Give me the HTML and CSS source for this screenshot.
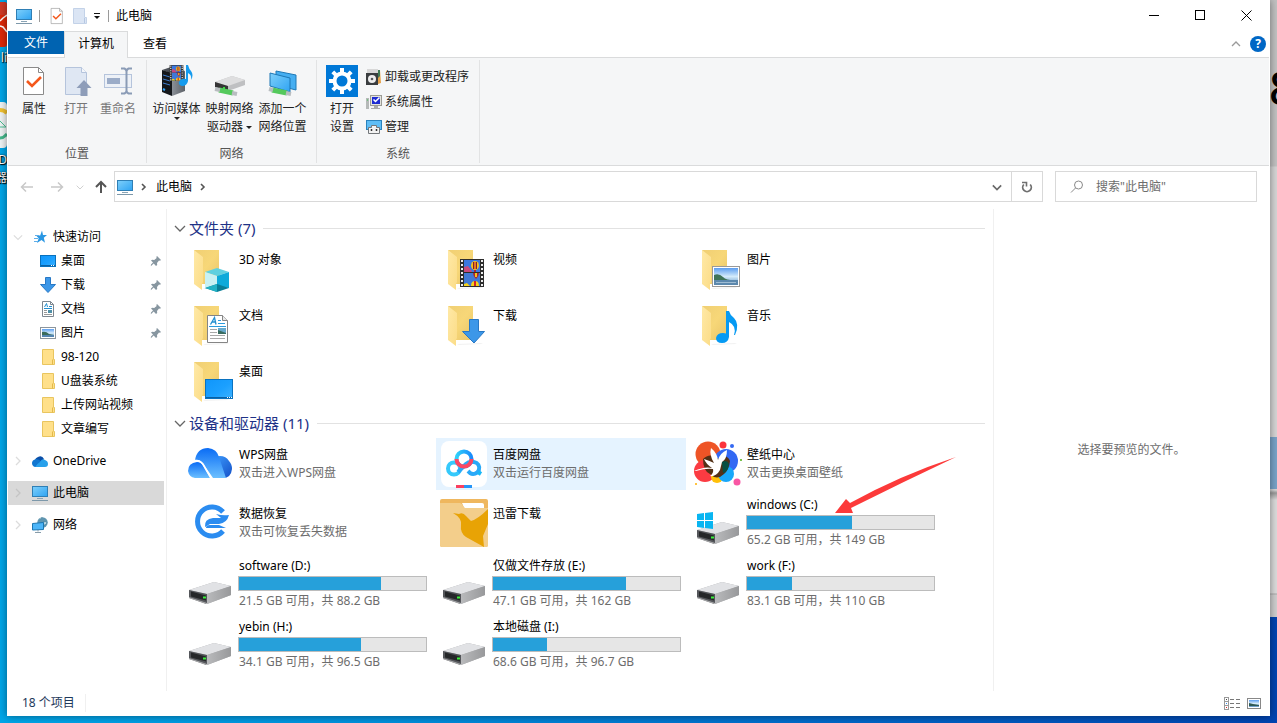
FILE: index.html
```html
<!DOCTYPE html>
<html lang="zh-CN">
<head>
  <meta charset="UTF-8" />
  <meta name="viewport" content="width=device-width, initial-scale=1.0"/>
  <title>此电脑</title>
  <link rel="stylesheet" href="styles.css">
</head>
<body>
  <!-- Icon definitions -->
  <svg class="defs" width="0" height="0" aria-hidden="true">
    <defs>
      <linearGradient id="g-screen" x1="0" y1="0" x2="1" y2="1"><stop offset="0" stop-color="#7fd0fb"/><stop offset="1" stop-color="#2ea3f2"/></linearGradient>
      <linearGradient id="g-desk" x1="0" y1="0" x2="1" y2="1"><stop offset="0" stop-color="#0f96fb"/><stop offset=".55" stop-color="#1ba0ff"/><stop offset="1" stop-color="#3db2ff"/></linearGradient>
      <linearGradient id="g-back" x1="0" y1="0" x2="1" y2="1"><stop offset="0" stop-color="#f0cf74"/><stop offset=".5" stop-color="#f7d778"/><stop offset="1" stop-color="#e8c468"/></linearGradient>
      <linearGradient id="g-flap" x1="0" y1="0" x2="1" y2="1"><stop offset="0" stop-color="#ffe9a6"/><stop offset="1" stop-color="#fbdc87"/></linearGradient>
      <linearGradient id="g-sky" x1="0" y1="0" x2="0" y2="1"><stop offset="0" stop-color="#5b9df0"/><stop offset=".5" stop-color="#d4ebfb"/><stop offset="1" stop-color="#5f93c4"/></linearGradient>
      <linearGradient id="g-side" x1="0" y1="0" x2="1" y2="0"><stop offset="0" stop-color="#b9babc"/><stop offset="1" stop-color="#98999b"/></linearGradient>
      <linearGradient id="g-wps1" x1="0" y1="0" x2="0" y2="1"><stop offset="0" stop-color="#0a6cf5"/><stop offset="1" stop-color="#6cc0ff"/></linearGradient>
      <linearGradient id="g-wps2" x1="0" y1="0" x2="1" y2="1"><stop offset="0" stop-color="#3fa0ff"/><stop offset="1" stop-color="#1450c8"/></linearGradient>
      <linearGradient id="g-baidu" x1="0" y1="0" x2="1" y2="0"><stop offset="0" stop-color="#2fd0fa"/><stop offset="1" stop-color="#1a8cfb"/></linearGradient>
      <linearGradient id="g-server" x1="0" y1="0" x2="1" y2="0"><stop offset="0" stop-color="#8b9097"/><stop offset="1" stop-color="#5c6168"/></linearGradient>
    </defs>

    <symbol id="i-pc" viewBox="0 0 16 16">
      <rect x=".5" y="1.5" width="15" height="10" fill="url(#g-screen)" stroke="#2f7fb5"/>
      <path d="M5 13.5h6" stroke="#8aa4b5"/><path d="M0 15.5h16" stroke="#7d98aa"/>
    </symbol>
    <symbol id="i-check" viewBox="0 0 24 32">
      <path d="M1.500 2.500h15l5 5v22h-20z" fill="#fff" stroke="#8a8a8a"/><path d="M16.500 2.500v5h5" fill="none" stroke="#8a8a8a"/>
      <path d="M5 16l5 5 9-9" fill="none" stroke="#f4581c" stroke-width="2.600"/>
    </symbol>
    <symbol id="i-open" viewBox="0 0 32 32">
      <path d="M5.500 2.500h16l5 5v22h-21z" fill="#dfe7f3" stroke="#b5c4dc"/><path d="M21.500 2.500v5h5" fill="#f3f6fb" stroke="#b5c4dc"/>
      <path d="M24 15l7.500 8h-4v8h-7v-8h-4z" fill="#8e9db9"/>
    </symbol>
    <symbol id="i-rename" viewBox="0 0 32 32">
      <rect x="2.500" y="9.500" width="27" height="13" fill="#edf1f7" stroke="#b5c4dc"/><rect x="5" y="13" width="13" height="6" fill="#9bacc8"/>
      <path d="M19 3.500h3.500q2 1 2 3v19q0 2-2 3H19M30 3.500h-3.500q-2 1-2 3v19q0 2 2 3H30" fill="none" stroke="#8a9bb6" stroke-width="2"/>
    </symbol>
    <symbol id="i-newfolder" viewBox="0 0 16 18">
      <path d="M1.500 1.500h11v9h2v6h-13z" fill="#dbe5f4" stroke="#c3d2e8"/><path d="M12.500 11v5" stroke="#b5c7e2"/>
    </symbol>
    <symbol id="i-balloons" viewBox="0 0 24 28">
      <rect width="24" height="28" fill="#2d2d2d"/><rect x="4" y="1" width="16" height="12" fill="#3b78df"/><rect x="4" y="14" width="16" height="13" fill="#4079d6"/>
      <path d="M2 1v26M22 1v26" stroke="#eee" stroke-width="2" stroke-dasharray="2 2"/>
      <path d="M4 8l4-1 3 4 1 2H4z" fill="#c84b7d"/><ellipse cx="15" cy="6.500" rx="4" ry="4.500" fill="#f5c21b"/><path d="M13.500 3v7M16.500 3v7" stroke="#7d1e2c" stroke-width="1"/><path d="M15 3v7" stroke="#d3282f"/><path d="M14 11h2v2h-2z" fill="#aa2630"/>
      <path d="M13 14h6q0 3-3 6-3-3-3-6z" fill="#aa2630"/><path d="M15 14h2v4h-2z" fill="#f5c21b"/>
      <path d="M11 27q0-5 4-5t4 5zM4 25l3-1 3 3H4z" fill="#f6d21a"/><path d="M15 22v5" stroke="#d2232b" stroke-width="2"/>
    </symbol>
    <symbol id="i-media" viewBox="0 0 32 32">
      <path d="M1 5l9-3 14 4-9 4z" fill="#4c5158"/><path d="M1 5l10 3v23L1 27z" fill="#15181c"/><path d="M11 9l13-3v20l-13 5z" fill="url(#g-server)"/>
      <path d="M2 10l7 2M2 14l7 2M2 18l7 2" stroke="#3f7fd0"/><path d="M2 24l2 1" stroke="#33a8ff" stroke-width="2"/>
      <use href="#i-balloons" x="8" y="0" width="15" height="16"/>
      <path d="M25 0h2q1 4 3 6 3 4 0 9 1-5-3-7v8q-1 5-6 5-4-1-3-4 2-4 7-3z" fill="#159bee"/>
    </symbol>
    <symbol id="i-netdrive" viewBox="0 0 32 32">
      <path d="M1 17L18 11l13 4v5L14 26 1 22z" fill="#bfc0c2"/><path d="M1 17L18 11l13 4-17 6z" fill="#dededf"/><path d="M1 17l13 4v5L1 22z" fill="#353535"/>
      <path d="M10 22v2" stroke="#37e03d" stroke-width="2"/>
      <path d="M5 25l14 3" stroke="#54c95c" stroke-width="5"/><path d="M1 24l5 1M18 28l5 1" stroke="#b8bdc0" stroke-width="4"/>
    </symbol>
    <symbol id="i-netplace" viewBox="0 0 32 32">
      <path d="M9 6l20 4v15L9 20z" fill="#45aef1" stroke="#1f79b6"/><path d="M3 8l20 5v14L3 21z" fill="url(#g-screen)" stroke="#1d77b5"/>
      <path d="M5 25l15 3" stroke="#54c95c" stroke-width="5"/><path d="M2 24l4 1M19 28l5 1" stroke="#b8bdc0" stroke-width="4"/>
    </symbol>
    <symbol id="i-settings" viewBox="0 0 32 32">
      <rect width="32" height="32" fill="#0078d7"/>
      <circle cx="16" cy="16" r="7.500" fill="none" stroke="#fff" stroke-width="4"/>
      <path d="M16 3v5M16 24v5M3 16h5M24 16h5M6.800 6.800l3.500 3.500M21.700 21.700l3.500 3.500M6.800 25.200l3.500-3.500M21.700 10.300l3.500-3.500" stroke="#fff" stroke-width="4"/>
    </symbol>
    <symbol id="i-uninstall" viewBox="0 0 16 16">
      <path d="M11 1h3l1 13-3 1z" fill="#e5a14a"/><path d="M11 1h3v6l-2 2z" fill="#417a55"/><rect x="0" y="4" width="12" height="12" fill="#3a3d40"/><rect x="1" y="0" width="11" height="4" fill="#d8d8d8"/>
      <circle cx="6" cy="10" r="4" fill="#ededed"/><circle cx="6" cy="10" r="1.300" fill="#55595d"/>
    </symbol>
    <symbol id="i-sysprop" viewBox="0 0 16 16">
      <rect x="0" y="4" width="3" height="11" fill="#b5b9b8"/><path d="M1 6h1" stroke="#35c84a"/><rect x="4.500" y="1.500" width="11" height="10" fill="#e3e3dd" stroke="#9b9b95"/>
      <rect x="6" y="3" width="8" height="7" fill="#1d2bd2"/><path d="M7.500 5.500l2 2 4-4" stroke="#fff" stroke-width="1.500" fill="none"/><path d="M8 12h4v2h2v1H5v-1h3z" fill="#aaa"/>
    </symbol>
    <symbol id="i-manage" viewBox="0 0 16 16">
      <rect x=".5" y="1.500" width="15" height="9" fill="#5fbdf5" stroke="#2b83bd"/><path d="M5.500 8.500v-2h5v2h3v6h-11v-6z" fill="#f2f2f2" stroke="#73777a"/><path d="M5.500 10v2M10.500 10v2" stroke="#333" stroke-width="1.500"/>
    </symbol>

    <symbol id="i-star" viewBox="0 0 16 16">
      <path d="M10 1.500l1 4.500h4l-3.200 2.800 1.200 5L9.500 11 5 14l1.700-4.800L4 6.500h4.200z" fill="#2a97e3"/><path d="M3 6.500h4M2 9.500h4M2 12.500h4" stroke="#5faee9"/>
    </symbol>
    <symbol id="i-desktop" viewBox="0 0 16 16"><rect x=".5" y="2.500" width="15" height="11" fill="url(#g-desk)" stroke="#0871bd"/><path d="M1 12.500h14" stroke="#0b62a5"/><path d="M11 12.500h1M13 12.500h1" stroke="#fff"/></symbol>
    <symbol id="i-down" viewBox="0 0 16 16"><path d="M5.500.5h5v7h5L8 15.500.5 7.500h5z" fill="#3c97e8" stroke="#2878c5"/></symbol>
    <symbol id="i-doc" viewBox="0 0 22 28">
      <path d="M.5.500h15l5 5v22H.5z" fill="#fff" stroke="#858585"/><path d="M15.500.5v5h5" fill="#e9e9e9" stroke="#858585"/>
      <path d="M3.500 9.500l4-7 1.500 7M5 7h4" fill="none" stroke="#238fd0" stroke-width="1.300"/><path d="M11 5.500h3M11 8.500h7M2 11.500h17" stroke="#2d9bdc"/>
      <path d="M3 14.500h7M3 17.500h7M3 20.500h15M3 23.500h15" stroke="#a8a8a8"/><rect x="11" y="13" width="8" height="6" fill="#67a9cc"/><path d="M11 15l8 3v1h-8z" fill="#3a6c60"/>
    </symbol>
    <symbol id="i-docsmall" viewBox="0 0 16 16">
      <path d="M2.500.5h8l3 3v12h-11z" fill="#fff" stroke="#7d8790"/><path d="M10.500.5v3h3" fill="none" stroke="#7d8790"/>
      <path d="M4.500 6l2-3.500L7.500 6M9 5.500h3M4 7.500h8" fill="none" stroke="#238fd0"/><path d="M4 9.500h3M4 11.500h3M4 13.500h8" stroke="#999"/><path d="M8 9h4v3H8z" fill="#4f90a8"/>
    </symbol>
    <symbol id="i-picture" viewBox="0 0 28 21" preserveAspectRatio="none">
      <rect x=".5" y=".5" width="27" height="20" fill="#fff" stroke="#999"/><rect x="2" y="2" width="24" height="17" fill="url(#g-sky)"/>
      <path d="M2 9q5-2 9 2t15 3v1H2z" fill="#3f7458"/><path d="M2 14h24v5H2z" fill="#5c88ad"/><path d="M4 16.500h20" stroke="#9fbcd3"/>
    </symbol>
    <symbol id="i-picsmall" viewBox="0 0 16 12">
      <rect x=".5" y=".5" width="15" height="11" fill="#fff" stroke="#8b959d"/><rect x="2" y="2" width="12" height="8" fill="url(#g-sky)"/><path d="M2 5q4-1 7 2l5 1v1H2z" fill="#3a6c5c"/><path d="M2 8h12v2H2z" fill="#5485b0"/>
    </symbol>
    <symbol id="i-folder" viewBox="0 0 16 16"><path d="M2.500.5h11v10h1v5h-12z" fill="#ffe08a" stroke="#e9c55e"/><path d="M12.500 10.500v5" stroke="#e3b94a"/></symbol>
    <symbol id="i-onedrive" viewBox="0 0 16 16"><path d="M3 8q0-3 3-4 4-2 6 2l-4 5z" fill="#0a4fa8"/><path d="M0 10q0-3 4-4 3 0 6 3l-4 5H3q-3-1-3-4z" fill="#1176d0"/><path d="M8 9q2-4 5-2 3 1 3 4t-3 3H3q3-4 5-5z" fill="#28a0ea"/></symbol>
    <symbol id="i-network" viewBox="0 0 16 16"><circle cx="10.500" cy="5.500" r="5.200" fill="#5f95b0"/><path d="M7 3q3 0 3-3M10 6q4-3 5 0-3 4-5 0" fill="#b5d4e0" stroke="#3d7895" stroke-width=".6"/><path d="M.5 6.500l11-1v7l-11 .5z" fill="#4cb5f8" stroke="#1c76b1"/><path d="M6 13v1.500M3 15.500h6" stroke="#879caa"/></symbol>
    <symbol id="i-pin" viewBox="0 0 12 12"><path d="M7 1l4 4-1 .8-1-.3-2 2.500.2 2L6 11 3.700 8.500.8 11.200 1 9.500l2-2L1 5.500 2.200 4.800l2 .2L6.700 3 6.300 2z" fill="#8796a0"/></symbol>
    <symbol id="i-chev" viewBox="0 0 10 10"><path d="M3 1l4 4-4 4" fill="none" stroke="currentColor" stroke-width="1.300"/></symbol>
    <symbol id="i-crumb" viewBox="0 0 10 10"><path d="M3 2l3 3-3 3" fill="none" stroke="currentColor" stroke-width="1.600"/></symbol>
    <symbol id="i-chevdown" viewBox="0 0 12 12"><path d="M1 4l5 5 5-5" fill="none" stroke="currentColor" stroke-width="1.300"/></symbol>
    <symbol id="i-caret" viewBox="0 0 6 4"><path d="M0 0h6L3 3z" fill="currentColor"/></symbol>

    <symbol id="i-big" viewBox="0 0 48 48">
      <path d="M17 43l24-1 2 1-24 1z" fill="#f2f2f2"/><path d="M8 5h25v34H14z" fill="url(#g-back)"/><path d="M8 5l9 7v25l-1 2v6l-8-6z" fill="url(#g-flap)"/>
    </symbol>
    <symbol id="i-cube" viewBox="0 0 24 24">
      <path d="M12 0l12 4-12 4L0 4z" fill="#5fd0df"/><path d="M0 4l12 4v11L0 19z" fill="#c9f1f3"/><path d="M24 4L12 8v11l12 1z" fill="#0daada"/><path d="M0 20l12-4 12 4-12 4z" fill="#087f98"/><path d="M0 20l12-4v8z" fill="#22b2c5"/>
    </symbol>
    <symbol id="i-drive" viewBox="0 0 42 22">
      <path d="M0 9l17 4v9L0 16z" fill="#78797b"/><path d="M0 8L25 0l17 4v9l-24 9-18-6z" fill="#a9aaac"/><path d="M0 8L25 0l17 4-24 8z" fill="#e1e2e5"/><path d="M18 12l24-8v9l-24 9z" fill="url(#g-side)"/>
      <path d="M0 8l18 4v9L0 15z" fill="#54565a"/><path d="M2 9.500l15 4v5L2 14.500z" fill="#252729"/><path d="M14 15.500h3" stroke="#3cf03c" stroke-width="2"/>
    </symbol>
    <symbol id="i-drivetile" viewBox="0 0 48 48"><use href="#i-drive" x="3" y="22" width="42" height="22"/></symbol>
  </svg>

  <!-- Desktop behind the window -->
  <div class="desktop" aria-hidden="true">
    <svg class="shortcut" width="7" height="200" viewBox="0 0 7 200">
      <path d="M0 2h4q3 0 3 3v39q0 3-3 3H0z" fill="#dd2808"/><path d="M0 2h4q3 0 3 3v10H0z" fill="#cf3a26"/><path d="M0 21l3-3 4-3M0 26l3 1 4 5" fill="none" stroke="#fff" stroke-width="1.500"/>
      <path d="M0 102h3q4 0 4 4v38q0 4-4 4H0z" fill="#f0f4f5"/><path d="M0 110q4 0 7 3" fill="none" stroke="#f2c230" stroke-width="4"/><path d="M0 121l6 6H0" fill="none" stroke="#49bf93"/><path d="M0 138q4 0 7-4" fill="none" stroke="#45b98c" stroke-width="3"/>
    </svg>
    <span class="shortcut-text text-li">li</span>
    <span class="shortcut-text text-d">D</span>
    <span class="shortcut-text text-qi">器</span>
    <div class="other-window">
      <span class="other-digit">8</span>
      <div class="other-selected"></div>
    </div>
  </div>

  <div class="window">
    <!-- Title bar -->
    <header class="titlebar">
      <svg class="ico16"><use href="#i-pc"/></svg>
      <span class="sep"></span>
      <button class="quick" aria-label="属性"><svg width="14" height="18"><use href="#i-check"/></svg></button>
      <button class="quick" aria-label="新建文件夹"><svg width="16" height="18"><use href="#i-newfolder"/></svg></button>
      <button class="quick quick-more" aria-label="自定义快速访问工具栏"><svg width="8" height="8" viewBox="0 0 8 8"><path d="M1 1.500h6" stroke="#111"/><path d="M1 4h6L4 7z" fill="#111"/></svg></button>
      <span class="sep sep-title"></span>
      <h1>此电脑</h1>
      <div class="controls">
        <button aria-label="最小化"><svg width="11" height="11" viewBox="0 0 11 11"><path d="M0 5.500h10" stroke="#000"/></svg></button>
        <button aria-label="最大化"><svg width="11" height="11" viewBox="0 0 11 11"><rect x=".5" y=".5" width="9" height="9" fill="none" stroke="#000"/></svg></button>
        <button aria-label="关闭"><svg width="11" height="11" viewBox="0 0 11 11"><path d="M.5.500l10 10M10.500.500l-10 10" stroke="#000"/></svg></button>
      </div>
    </header>

    <!-- Ribbon tabs -->
    <nav class="tabs">
      <button class="tab tab-file">文件</button>
      <button class="tab tab-active">计算机</button>
      <button class="tab">查看</button>
      <div class="tabs-right">
        <button class="collapse" aria-label="最小化功能区"><svg width="10" height="10" viewBox="0 0 10 10"><path d="M1 7l4-4 4 4" fill="none" stroke="#9a9a9a" stroke-width="1.300"/></svg></button>
        <button class="help" aria-label="帮助">?</button>
      </div>
    </nav>

    <!-- Ribbon -->
    <div class="ribbon">
      <section class="group">
        <div class="group-items group-place">
          <button class="big-btn"><svg><use href="#i-check"/></svg><span>属性</span></button>
          <button class="big-btn dim"><svg><use href="#i-open"/></svg><span>打开</span></button>
          <button class="big-btn dim"><svg><use href="#i-rename"/></svg><span>重命名</span></button>
        </div>
        <h2>位置</h2>
      </section>
      <section class="group">
        <div class="group-items group-net">
          <button class="big-btn"><svg><use href="#i-media"/></svg><span>访问媒体</span><svg class="caret"><use href="#i-caret"/></svg></button>
          <button class="big-btn"><svg><use href="#i-netdrive"/></svg><span>映射网络<br>驱动器 <svg class="caret"><use href="#i-caret"/></svg></span></button>
          <button class="big-btn"><svg><use href="#i-netplace"/></svg><span>添加一个<br>网络位置</span></button>
        </div>
        <h2>网络</h2>
      </section>
      <section class="group">
        <div class="group-items group-sys">
          <button class="big-btn"><svg><use href="#i-settings"/></svg><span>打开<br>设置</span></button>
          <div class="small-list">
            <button><svg class="ico16"><use href="#i-uninstall"/></svg>卸载或更改程序</button>
            <button><svg class="ico16"><use href="#i-sysprop"/></svg>系统属性</button>
            <button><svg class="ico16"><use href="#i-manage"/></svg>管理</button>
          </div>
        </div>
        <h2>系统</h2>
      </section>
    </div>

    <!-- Address bar -->
    <div class="navbar">
      <button class="nav-btn off" aria-label="后退"><svg width="14" height="12" viewBox="0 0 14 12"><path d="M13 6H2M6 1.500L1.500 6 6 10.500" fill="none" stroke="currentColor" stroke-width="1.500"/></svg></button>
      <button class="nav-btn off" aria-label="前进"><svg width="14" height="12" viewBox="0 0 14 12"><path d="M1 6h11M8 1.500L12.500 6 8 10.500" fill="none" stroke="currentColor" stroke-width="1.500"/></svg></button>
      <button class="nav-btn nav-recent off" aria-label="最近浏览的位置"><svg width="8" height="8"><use href="#i-chevdown"/></svg></button>
      <button class="nav-btn nav-up" aria-label="上移"><svg width="12" height="14" viewBox="0 0 12 14"><path d="M6 13V2M1 7l5-5 5 5" fill="none" stroke="currentColor" stroke-width="2"/></svg></button>
      <div class="address">
        <svg class="ico16"><use href="#i-pc"/></svg>
        <svg class="crumb-arrow"><use href="#i-crumb"/></svg>
        <a href="#pc">此电脑</a>
        <svg class="crumb-arrow"><use href="#i-crumb"/></svg>
        <button class="history" aria-label="以前的位置"><svg width="10" height="10" viewBox="0 0 12 12"><path d="M1 4l5 5 5-5" fill="none" stroke="#6a6a6a" stroke-width="2"/></svg></button>
        <button class="refresh" aria-label="刷新"><svg width="12" height="12" viewBox="0 0 12 12"><path d="M2.800 3.500a4.300 4.300 0 1 0 6.400 0" fill="none" stroke="#707070" stroke-width="1.800"/><path d="M1 1.500h4.500v4" fill="none" stroke="#707070" stroke-width="1.600"/></svg></button>
      </div>
      <label class="search">
        <svg width="14" height="14" viewBox="0 0 14 14"><circle cx="8.500" cy="5" r="4" fill="none" stroke="#8a8a8a"/><path d="M5.500 8L1 12.500" stroke="#8a8a8a"/></svg>
        <input type="text" placeholder='搜索"此电脑"' aria-label="搜索">
      </label>
    </div>

    <div class="body">
      <!-- Navigation pane -->
      <nav class="sidebar">
        <a class="row open" href="#quick"><svg class="twist"><use href="#i-chevdown"/></svg><svg class="ico16"><use href="#i-star"/></svg>快速访问</a>
        <a class="row child" href="#desktop"><svg class="ico16"><use href="#i-desktop"/></svg>桌面<svg class="pin"><use href="#i-pin"/></svg></a>
        <a class="row child" href="#downloads"><svg class="ico16"><use href="#i-down"/></svg>下载<svg class="pin"><use href="#i-pin"/></svg></a>
        <a class="row child" href="#documents"><svg class="ico16"><use href="#i-docsmall"/></svg>文档<svg class="pin"><use href="#i-pin"/></svg></a>
        <a class="row child" href="#pictures"><svg class="ico16"><use href="#i-picsmall"/></svg>图片<svg class="pin"><use href="#i-pin"/></svg></a>
        <a class="row child" href="#f1"><svg class="ico16"><use href="#i-folder"/></svg>98-120</a>
        <a class="row child" href="#f2"><svg class="ico16"><use href="#i-folder"/></svg>U盘装系统</a>
        <a class="row child" href="#f3"><svg class="ico16"><use href="#i-folder"/></svg>上传网站视频</a>
        <a class="row child" href="#f4"><svg class="ico16"><use href="#i-folder"/></svg>文章编写</a>
        <a class="row root" href="#onedrive"><svg class="twist"><use href="#i-chev"/></svg><svg class="ico16"><use href="#i-onedrive"/></svg>OneDrive</a>
        <a class="row root selected" href="#pc"><svg class="twist"><use href="#i-chev"/></svg><svg class="ico16"><use href="#i-pc"/></svg>此电脑</a>
        <a class="row root" href="#network"><svg class="twist"><use href="#i-chev"/></svg><svg class="ico16"><use href="#i-network"/></svg>网络</a>
      </nav>

      <main class="content">
        <h2 class="heading"><svg><use href="#i-chevdown"/></svg>文件夹 (7)</h2>
        <div class="tiles">
          <a class="tile" href="#3d"><svg class="ico48" viewBox="0 0 48 48"><use href="#i-big"/><use href="#i-cube" x="19" y="23" width="24" height="24"/></svg><span class="info"><span class="name">3D 对象</span></span></a>
          <a class="tile" href="#videos"><svg class="ico48" viewBox="0 0 48 48"><use href="#i-big"/><use href="#i-balloons" x="20" y="14" width="24" height="28"/></svg><span class="info"><span class="name">视频</span></span></a>
          <a class="tile" href="#pictures"><svg class="ico48" viewBox="0 0 48 48"><use href="#i-big"/><use href="#i-picture" x="18" y="21" width="28" height="21"/></svg><span class="info"><span class="name">图片</span></span></a>
          <a class="tile" href="#documents"><svg class="ico48" viewBox="0 0 48 48"><use href="#i-big"/><use href="#i-doc" x="21" y="14" width="22" height="28"/></svg><span class="info"><span class="name">文档</span></span></a>
          <a class="tile" href="#downloads"><svg class="ico48" viewBox="0 0 48 48"><use href="#i-big"/><path d="M29.500 18.500h9v12h6L34 42 22.500 30.500h7z" fill="#3c97e8" stroke="#2878c5"/></svg><span class="info"><span class="name">下载</span></span></a>
          <a class="tile" href="#music"><svg class="ico48" viewBox="0 0 48 48"><use href="#i-big"/><path d="M32 10h3q1 4 5 7 6 6 1 17h-1q3-9-5-13v15q-1 6-7 6-6 0-6-5 1-5 7-5 2 0 3 .5z" fill="#069af3"/></svg><span class="info"><span class="name">音乐</span></span></a>
          <a class="tile" href="#desktop"><svg class="ico48" viewBox="0 0 48 48"><use href="#i-big"/><rect x="19.500" y="22.500" width="27" height="19" fill="url(#g-desk)" stroke="#0a72c0"/><path d="M20 40.500h26" stroke="#0a60a4"/><path d="M41 40.500h5" stroke="#fff" stroke-dasharray="1 1"/></svg><span class="info"><span class="name">桌面</span></span></a>
        </div>

        <h2 class="heading"><svg><use href="#i-chevdown"/></svg>设备和驱动器 (11)</h2>
        <div class="tiles devices">
          <a class="tile" href="#wps">
            <svg class="ico48" viewBox="0 0 48 48"><path d="M29 38L25 21q3-5 9-5 6 0 9 5 3 3 3 8-1 9-9 9z" fill="url(#g-wps2)"/><path d="M9 20Q11 8 22 8q9 1 11 9 1 3 7 21H27L16 22q-3-3-7-2z" fill="url(#g-wps1)"/><path d="M2 31q0-8 9-9 4 0 6 4l7 12H9q-6-1-7-7z" fill="url(#g-wps1)"/><path d="M5 21q8-2 12 3l8 14" fill="none" stroke="#fff" stroke-width="1.500"/></svg>
            <span class="info"><span class="name">WPS网盘</span><span class="detail">双击进入WPS网盘</span></span>
          </a>
          <a class="tile hover" href="#baidu">
            <svg class="ico48" viewBox="0 0 48 48"><rect x="1" y="1" width="46" height="46" rx="8" fill="#fff"/><circle cx="24" cy="19" r="7.500" fill="none" stroke="url(#g-baidu)" stroke-width="4"/><circle cx="14" cy="28.500" r="6" fill="none" stroke="#35c9fb" stroke-width="4"/><path d="M18 32l8-8q3-3 8-2a6 6 0 1 1-4 11l-2-2" fill="none" stroke="#2aa9f8" stroke-width="4"/><path d="M16.500 19a7.500 7.500 0 0 0 15 0" fill="none" stroke="#fb4763" stroke-width="4"/><path d="M38 32l3 2" stroke="#18b7f6" stroke-width="4"/><path d="M16 45h8v3h-8z" fill="#fb3f60"/><path d="M24 45h8v3h-8z" fill="#2595f8"/></svg>
            <span class="info"><span class="name">百度网盘</span><span class="detail">双击运行百度网盘</span></span>
          </a>
          <a class="tile" href="#wallpaper">
            <svg class="ico48" viewBox="0 0 48 48"><circle cx="14" cy="14" r="12.500" fill="#ee5426"/><circle cx="32" cy="21" r="12" fill="#3268f3"/><circle cx="11" cy="31" r="11" fill="#fb3b42"/><circle cx="23" cy="37" r="6" fill="#ffc009"/><circle cx="32" cy="34" r="8" fill="#18a8fa"/><path d="M9 19q7-7 16 0 8-6 11 2-1 9-6 13-7 7-14 0-7-3-7-15z" fill="#533016"/><path d="M28 22q5-3 7 2-1 8-6 9z" fill="#074f42"/><path d="M0 31q11-5 18-3-6-4-8-9 6 2 10 4-5-8-3-15 6 5 7 12 2-7 9-10 0 9-5 12l-2 8q-4 7-10 6 4-3 3-7-7-1-17 2z" fill="#fff"/><circle cx="29" cy="5" r="3.500" fill="#fb343c"/><circle cx="38" cy="6" r="2" fill="#3569f2"/><circle cx="43" cy="42" r="3.500" fill="#f957a4"/><circle cx="47" cy="20" r="1" fill="#4cad13"/><circle cx="2" cy="44" r="1" fill="#ffaf00"/></svg>
            <span class="info"><span class="name">壁纸中心</span><span class="detail">双击更换桌面壁纸</span></span>
          </a>
          <a class="tile" href="#recovery">
            <svg class="ico48" viewBox="0 0 48 48"><path d="M37 13A14.500 14.500 0 1 0 37 32" fill="none" stroke="#2b8cf0" stroke-width="5"/><path d="M43 16q-2 8-10 9h-9l-5 3q-1-8 8-9h8l-5-4q7 2 13 1z" fill="#2b8cf0"/><path d="M40 29H20q0-3 4-3h9z" fill="#2b8cf0"/></svg>
            <span class="info"><span class="name">数据恢复</span><span class="detail">双击可恢复丢失数据</span></span>
          </a>
          <a class="tile" href="#xunlei">
            <svg class="ico48" viewBox="0 0 48 48"><rect width="48" height="48" rx="2" fill="#efb75e"/><path d="M22 4h20q2 0 2 2v7H26z" fill="#fff"/><path d="M0 4h20q2 0 3 3l2 2h23v37q0 2-2 2H2q-2 0-2-2z" fill="#f3ce8b"/><path d="M13 14l6 1q4-2 7 2l5 5q7-2 17-12v15l-5 12 1 11-18-10q-6-4-5-12 1-7-8-12z" fill="#e8a305"/></svg>
            <span class="info"><span class="name">迅雷下载</span></span>
          </a>
          <a class="tile tile-system" href="#c">
            <svg class="ico48" viewBox="0 0 48 48"><use href="#i-drive" x="3" y="23" width="42" height="22"/><path d="M3 15l7-1v7H3zM11 14l8-1v8h-8zM3 22h7v7l-7-1zM11 22h8v8l-8-1z" fill="#09b5f1"/></svg>
            <span class="info"><span class="name">windows (C:)</span><span class="bar"><span class="fill" style="width:56%"></span></span><span class="detail">65.2 GB 可用，共 149 GB</span></span>
            <!-- Arrow drawn over the C: drive -->
            <svg class="arrow" width="122" height="58" viewBox="0 0 122 58"><path d="M0 56L11 42l4 4Q66 18 121 0 68 25 16 51l2 5z" fill="#fc3a3a"/></svg>
          </a>
          <a class="tile" href="#d"><svg class="ico48"><use href="#i-drivetile"/></svg><span class="info"><span class="name">software (D:)</span><span class="bar"><span class="fill" style="width:76%"></span></span><span class="detail">21.5 GB 可用，共 88.2 GB</span></span></a>
          <a class="tile" href="#e"><svg class="ico48"><use href="#i-drivetile"/></svg><span class="info"><span class="name">仅做文件存放 (E:)</span><span class="bar"><span class="fill" style="width:71%"></span></span><span class="detail">47.1 GB 可用，共 162 GB</span></span></a>
          <a class="tile" href="#f"><svg class="ico48"><use href="#i-drivetile"/></svg><span class="info"><span class="name">work (F:)</span><span class="bar"><span class="fill" style="width:24%"></span></span><span class="detail">83.1 GB 可用，共 110 GB</span></span></a>
          <a class="tile" href="#h"><svg class="ico48"><use href="#i-drivetile"/></svg><span class="info"><span class="name">yebin (H:)</span><span class="bar"><span class="fill" style="width:65%"></span></span><span class="detail">34.1 GB 可用，共 96.5 GB</span></span></a>
          <a class="tile" href="#i"><svg class="ico48"><use href="#i-drivetile"/></svg><span class="info"><span class="name">本地磁盘 (I:)</span><span class="bar"><span class="fill" style="width:29%"></span></span><span class="detail">68.6 GB 可用，共 96.7 GB</span></span></a>
        </div>
      </main>

      <aside class="preview">选择要预览的文件。</aside>
    </div>

    <!-- Status bar -->
    <footer class="status">
      <span class="count">18 个项目</span>
      <div class="views">
        <button aria-label="详细信息"><svg width="16" height="13" viewBox="0 0 16 13"><rect x=".5" y=".5" width="4" height="12" fill="#fff" stroke="#999"/><path d="M1 4.500h3M1 8.500h3" stroke="#999"/><path d="M6 2.500h4M12 2.500h4M6 6.500h4M12 6.500h4M6 10.500h4M12 10.500h4" stroke="#777"/><path d="M2 2.500h1" stroke="#444"/><path d="M2 6.500h1" stroke="#3a8cf0"/><path d="M2 10.500h1" stroke="#e02828"/></svg></button>
        <button aria-label="大图标"><svg width="14" height="11" viewBox="0 0 14 11"><rect x=".5" y=".5" width="13" height="10" fill="#fff" stroke="#888"/><rect x="2" y="2" width="10" height="7" fill="url(#g-sky)"/><path d="M2 5l4 1 6 1v1H2z" fill="#2f5a55"/></svg></button>
      </div>
    </footer>
  </div>
</body>
</html>
```
FILE: styles.css
```css
* {
  box-sizing: border-box;
}
body {
  display: flex;
  margin: 0;
  padding: 0 7px 7px;
  min-height: 100vh;
  font-family: "Noto Sans", "Noto Sans CJK SC", sans-serif;
  font-size: 12px;
  line-height: 18px;
  color: #000;
  background: linear-gradient(90deg, #00a6e8, #0090dc 30%, #0068c8 65%, #0044b0);
  overflow: hidden;
}
button {
  padding: 0;
  border: 0;
  background: none;
  font: inherit;
  color: inherit;
}
a {
  color: inherit;
  text-decoration: none;
}
h1, h2 {
  margin: 0;
  font-size: 12px;
  font-weight: normal;
}
svg {
  display: block;
  flex: none;
}
.defs {
  position: absolute;
}
.ico16 {
  width: 16px;
  height: 16px;
}
.ico48 {
  width: 48px;
  height: 48px;
}

/* Desktop */
.desktop {
  position: absolute;
  inset: 0;
  overflow: hidden;
}
.shortcut {
  position: absolute;
  top: 0;
  left: 0;
}
.shortcut-text {
  position: absolute;
  right: calc(100% - 7px);
  color: #fff;
  text-shadow: 1px 1px 1px #000, 0 0 2px #000;
}
.text-li {
  top: 49px;
}
.text-d {
  top: 151px;
}
.text-qi {
  top: 169px;
}
.other-window {
  position: absolute;
  top: 0;
  right: 0;
  width: 7px;
  height: 617px;
  background: linear-gradient(#c2c2c2 166px, #d6d6d6 167px 490px, #999 493px, #dcdcdc 500px 593px, #aaa 594px, #cfcfcf 595px);
  overflow: hidden;
}
.other-digit {
  position: absolute;
  top: 64px;
  left: -1px;
  font-size: 46px;
  line-height: 46px;
  font-weight: 500;
}
.other-selected {
  position: absolute;
  top: 437px;
  width: 7px;
  height: 52px;
  background: #78a3c8;
}

/* Window */
.window {
  position: relative;
  flex: 1;
  min-width: 0;
  display: flex;
  flex-direction: column;
  background: #fff;
  border: solid #fff;
  border-width: 0 1px 1px;
  box-shadow: 0 0 8px rgba(0, 0, 0, 0.45);
}
.titlebar {
  display: flex;
  align-items: center;
  height: 31px;
  padding-left: 8px;
}
.sep {
  width: 1px;
  height: 12px;
  margin: 0 7px;
  background: #9a9a9a;
}
.quick {
  width: 20px;
  margin-right: 3px;
}
.quick svg {
  margin: 0 auto;
}
.quick-more {
  width: 8px;
  margin-right: 0;
}
.titlebar h1 {
  flex: 1;
}
.controls {
  display: flex;
}
.controls button {
  width: 46px;
  height: 31px;
}
.controls svg {
  margin: 0 auto;
}

/* Tabs */
.tabs {
  display: flex;
  height: 27px;
  border-bottom: 1px solid #dadbdc;
}
.tab {
  width: 54px;
  height: 25px;
}
.tab-file {
  width: 56px;
  height: 23px;
  background: #0063b1;
  color: #fff;
}
.tab-active {
  width: 64px;
  height: 27px;
  padding-bottom: 2px;
  background: #f5f6f7;
  border: 1px solid #dadbdc;
  border-bottom: 0;
}
.tabs-right {
  display: flex;
  align-items: center;
  gap: 9px;
  margin-left: auto;
  padding-right: 3px;
}
.help {
  width: 16px;
  height: 16px;
  border-radius: 50%;
  background: #0067c5;
  color: #fff;
  font-weight: bold;
  line-height: 16px;
}

/* Ribbon */
.ribbon {
  display: flex;
  height: 108px;
  padding: 2px 0;
  background: #f5f6f7;
  border-bottom: 1px solid #dadbdc;
}
.group {
  display: flex;
  flex-direction: column;
  justify-content: space-between;
  border-right: 1px solid #e2e3e4;
  text-align: center;
}
.group h2 {
  color: #555;
}
.group-items {
  display: flex;
  padding-top: 5px;
}
.group-place {
  padding-left: 5px;
  padding-right: 7px;
}
.group-net {
  padding-left: 3px;
  padding-right: 7px;
}
.group-sys {
  padding-left: 7px;
  padding-right: 10px;
}
.big-btn {
  display: flex;
  flex-direction: column;
  align-items: center;
  gap: 3px;
  width: 42px;
  color: #222;
  white-space: nowrap;
}
.big-btn > svg {
  width: 32px;
  height: 32px;
}
.group-net .big-btn {
  width: 53px;
}
.group-sys .big-btn {
  width: 36px;
}
.big-btn .caret {
  display: inline-block;
  width: 6px;
  height: 4px;
  vertical-align: middle;
}
.big-btn > .caret {
  margin-top: -4px;
}
.dim {
  color: #777;
}
.small-list {
  display: flex;
  flex-direction: column;
  margin: -1px 0 0 6px;
}
.small-list button {
  display: flex;
  align-items: center;
  gap: 3px;
  height: 25px;
  color: #222;
}

/* Address bar */
.navbar {
  display: flex;
  padding: 5px 12px 7px 4px;
}
.nav-btn {
  width: 30px;
  color: #555;
}
.nav-btn svg {
  margin: 0 auto;
}
.nav-recent {
  width: 16px;
}
.nav-up {
  width: 26px;
}
.off {
  color: #c8c8c8;
}
.address {
  flex: 1;
  display: flex;
  align-items: center;
  height: 31px;
  padding-left: 2px;
  border: 1px solid #d9d9d9;
}
.crumb-arrow {
  width: 10px;
  height: 10px;
  margin: 0 7px 0 6px;
  color: #555;
}
.history {
  margin-left: auto;
  width: 28px;
  height: 29px;
}
.refresh {
  width: 31px;
  height: 29px;
  border-left: 1px solid #d9d9d9;
}
.history svg, .refresh svg {
  margin: 0 auto;
}
.search {
  display: flex;
  align-items: center;
  gap: 12px;
  width: 202px;
  margin-left: 12px;
  padding-left: 14px;
  border: 1px solid #d9d9d9;
}
.search input {
  flex: 1;
  min-width: 0;
  padding: 0;
  border: 0;
  outline: 0;
  font: inherit;
}
.search input::placeholder {
  color: #6d6d6d;
}

/* Panes */
.body {
  flex: 1;
  display: flex;
}
.sidebar {
  width: 159px;
  padding: 16px 2px 0 0;
  border-right: 1px solid #f0f0f0;
}
.row {
  display: flex;
  align-items: center;
  height: 24px;
  padding-left: 5px;
}
.row .ico16 {
  margin-right: 5px;
}
.twist {
  width: 10px;
  height: 10px;
  margin-right: 9px;
  color: #dcdcdc;
}
.child {
  padding-left: 32px;
}
.pin {
  width: 12px;
  height: 12px;
  margin-left: auto;
  margin-right: 2px;
}
.root {
  margin-bottom: 8px;
}
.child + .root {
  margin-top: 8px;
}
.selected {
  background: #d9d9d9;
}
.selected .twist {
  color: #c4c4c4;
}
.content {
  flex: 1;
  min-width: 0;
  padding: 4px 8px 0 7px;
}
.heading {
  display: flex;
  align-items: center;
  height: 30px;
  font-size: 15px;
  color: #1e3287;
}
.heading svg {
  width: 12px;
  height: 12px;
  margin-right: 3px;
  color: #666;
}
.heading::after {
  content: "";
  flex: 1;
  height: 1px;
  margin-left: 8px;
  background: #e2e2e2;
}
.tiles {
  display: grid;
  grid-template-columns: repeat(auto-fill, 250px);
  gap: 4px;
  padding: 0 0 1px 8px;
}
.tile {
  display: flex;
  align-items: center;
  gap: 4px;
  min-height: 52px;
  padding: 2px 4px;
}
.hover {
  background: #e5f3ff;
}
.info {
  display: flex;
  flex-direction: column;
  width: 189px;
  min-height: 36px;
}
.name, .detail {
  padding-left: 1px;
}
.detail {
  color: #6d6d6d;
}
.bar {
  height: 15px;
  margin: 1px 0;
  border: 1px solid #bcbcbc;
  background: #e6e6e6;
}
.fill {
  display: block;
  height: 100%;
  background: #26a0da;
}
.tile-system {
  position: relative;
}
.arrow {
  position: absolute;
  left: 145px;
  top: -37px;
}
.preview {
  display: flex;
  align-items: center;
  justify-content: center;
  width: 276px;
  border-left: 1px solid #f0f0f0;
  color: #6d6d6d;
}

/* Status bar */
.status {
  display: flex;
  align-items: center;
  justify-content: space-between;
  height: 24px;
  padding: 0 8px 0 14px;
}
.count {
  padding-right: 10px;
  border-right: 1px solid #f0f0f0;
  color: #1e395b;
}
.views {
  display: flex;
  align-items: center;
  gap: 7px;
}
```
